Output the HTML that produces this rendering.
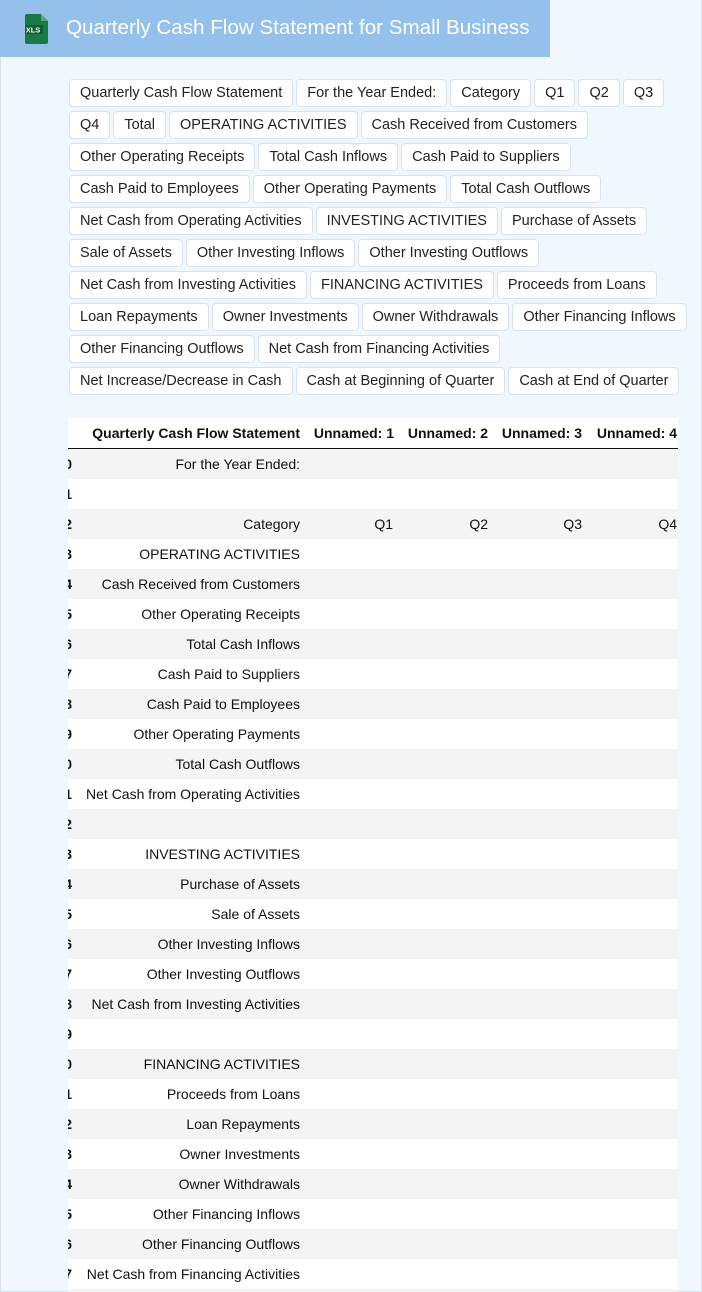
<!DOCTYPE html>
<html><head><meta charset="utf-8"><style>
*{box-sizing:border-box;margin:0;padding:0}
html,body{width:702px;height:1292px;overflow:hidden;background:#f0f7ff;font-family:"Liberation Sans",Arial,sans-serif}
.frame{position:absolute;left:0;top:0;width:702px;height:1292px;border:1px solid #d6e2ee;border-top:none}
.hdr{position:absolute;left:0;top:0;width:550px;height:57px;background:#93c1ec}
.hdr h1{position:absolute;left:66px;top:16px;font-weight:normal;font-size:20.6px;color:#fff;white-space:nowrap}
.icon{position:absolute;left:25px;top:14px}
.tags{position:absolute;left:69px;top:79px}
.row{display:flex;gap:3px;margin-bottom:4px;height:28px}
.t{height:28px;line-height:26px;padding:0 10px;background:#fff;border:1px solid #d8e2ee;border-radius:4px;font-size:14.5px;color:#222;white-space:nowrap}
.tbl{position:absolute;left:68px;top:418px;width:610px;height:874px;overflow:hidden;background:#fff}
.r{position:absolute;left:0;width:610px;height:30px;font-size:14px;color:#111}
.r.g{background:#f4f4f4}
.r span{position:absolute;top:7px;white-space:nowrap}
.idx{right:606px;font-weight:bold}
.c1{right:378px}
.h span{font-weight:bold;font-size:14px}
.h{border-bottom:1px solid #111;height:31px}
</style></head><body>
<div class="frame"></div>
<div class="hdr">
<svg class="icon" width="24" height="30" viewBox="0 0 24 30"><path d="M2 0h14l7 7v21a2 2 0 0 1-2 2H2a2 2 0 0 1-2-2V2a2 2 0 0 1 2-2z" fill="#1a7a45"/><path d="M16 0v7h7z" fill="#5aa57a"/><rect x="-2" y="11" width="20" height="9" fill="#0f5e33"/><text x="8" y="18.5" font-size="7.5" fill="#fff" text-anchor="middle" font-family="Liberation Sans" font-weight="bold">XLS</text></svg>
<h1>Quarterly Cash Flow Statement for Small Business</h1>
</div>
<div class="tags">
<div class="row"><div class="t">Quarterly Cash Flow Statement</div><div class="t">For the Year Ended:</div><div class="t">Category</div><div class="t">Q1</div><div class="t">Q2</div><div class="t">Q3</div></div>
<div class="row"><div class="t">Q4</div><div class="t">Total</div><div class="t">OPERATING ACTIVITIES</div><div class="t">Cash Received from Customers</div></div>
<div class="row"><div class="t">Other Operating Receipts</div><div class="t">Total Cash Inflows</div><div class="t">Cash Paid to Suppliers</div></div>
<div class="row"><div class="t">Cash Paid to Employees</div><div class="t">Other Operating Payments</div><div class="t">Total Cash Outflows</div></div>
<div class="row"><div class="t">Net Cash from Operating Activities</div><div class="t">INVESTING ACTIVITIES</div><div class="t">Purchase of Assets</div></div>
<div class="row"><div class="t">Sale of Assets</div><div class="t">Other Investing Inflows</div><div class="t">Other Investing Outflows</div></div>
<div class="row"><div class="t">Net Cash from Investing Activities</div><div class="t">FINANCING ACTIVITIES</div><div class="t">Proceeds from Loans</div></div>
<div class="row"><div class="t">Loan Repayments</div><div class="t">Owner Investments</div><div class="t">Owner Withdrawals</div><div class="t">Other Financing Inflows</div></div>
<div class="row"><div class="t">Other Financing Outflows</div><div class="t">Net Cash from Financing Activities</div></div>
<div class="row"><div class="t">Net Increase/Decrease in Cash</div><div class="t">Cash at Beginning of Quarter</div><div class="t">Cash at End of Quarter</div></div>
</div>
<div class="tbl">
<div class="r h" style="top:0"><span class="c1">Quarterly Cash Flow Statement</span><span style="right:284px">Unnamed: 1</span><span style="right:190px">Unnamed: 2</span><span style="right:96px">Unnamed: 3</span><span style="right:1px">Unnamed: 4</span></div>
<div class="r g" style="top:31px"><span class="idx">0</span><span class="c1">For the Year Ended:</span></div>
<div class="r" style="top:61px"><span class="idx">1</span></div>
<div class="r g" style="top:91px"><span class="idx">2</span><span class="c1">Category</span><span style="right:285px">Q1</span><span style="right:190px">Q2</span><span style="right:96px">Q3</span><span style="right:1px">Q4</span></div>
<div class="r" style="top:121px"><span class="idx">3</span><span class="c1">OPERATING ACTIVITIES</span></div>
<div class="r g" style="top:151px"><span class="idx">4</span><span class="c1">Cash Received from Customers</span></div>
<div class="r" style="top:181px"><span class="idx">5</span><span class="c1">Other Operating Receipts</span></div>
<div class="r g" style="top:211px"><span class="idx">6</span><span class="c1">Total Cash Inflows</span></div>
<div class="r" style="top:241px"><span class="idx">7</span><span class="c1">Cash Paid to Suppliers</span></div>
<div class="r g" style="top:271px"><span class="idx">8</span><span class="c1">Cash Paid to Employees</span></div>
<div class="r" style="top:301px"><span class="idx">9</span><span class="c1">Other Operating Payments</span></div>
<div class="r g" style="top:331px"><span class="idx">10</span><span class="c1">Total Cash Outflows</span></div>
<div class="r" style="top:361px"><span class="idx">11</span><span class="c1">Net Cash from Operating Activities</span></div>
<div class="r g" style="top:391px"><span class="idx">12</span></div>
<div class="r" style="top:421px"><span class="idx">13</span><span class="c1">INVESTING ACTIVITIES</span></div>
<div class="r g" style="top:451px"><span class="idx">14</span><span class="c1">Purchase of Assets</span></div>
<div class="r" style="top:481px"><span class="idx">15</span><span class="c1">Sale of Assets</span></div>
<div class="r g" style="top:511px"><span class="idx">16</span><span class="c1">Other Investing Inflows</span></div>
<div class="r" style="top:541px"><span class="idx">17</span><span class="c1">Other Investing Outflows</span></div>
<div class="r g" style="top:571px"><span class="idx">18</span><span class="c1">Net Cash from Investing Activities</span></div>
<div class="r" style="top:601px"><span class="idx">19</span></div>
<div class="r g" style="top:631px"><span class="idx">20</span><span class="c1">FINANCING ACTIVITIES</span></div>
<div class="r" style="top:661px"><span class="idx">21</span><span class="c1">Proceeds from Loans</span></div>
<div class="r g" style="top:691px"><span class="idx">22</span><span class="c1">Loan Repayments</span></div>
<div class="r" style="top:721px"><span class="idx">23</span><span class="c1">Owner Investments</span></div>
<div class="r g" style="top:751px"><span class="idx">24</span><span class="c1">Owner Withdrawals</span></div>
<div class="r" style="top:781px"><span class="idx">25</span><span class="c1">Other Financing Inflows</span></div>
<div class="r g" style="top:811px"><span class="idx">26</span><span class="c1">Other Financing Outflows</span></div>
<div class="r" style="top:841px"><span class="idx">27</span><span class="c1">Net Cash from Financing Activities</span></div>
<div class="r g" style="top:871px"><span class="idx">28</span></div>
</div>
</body></html>
